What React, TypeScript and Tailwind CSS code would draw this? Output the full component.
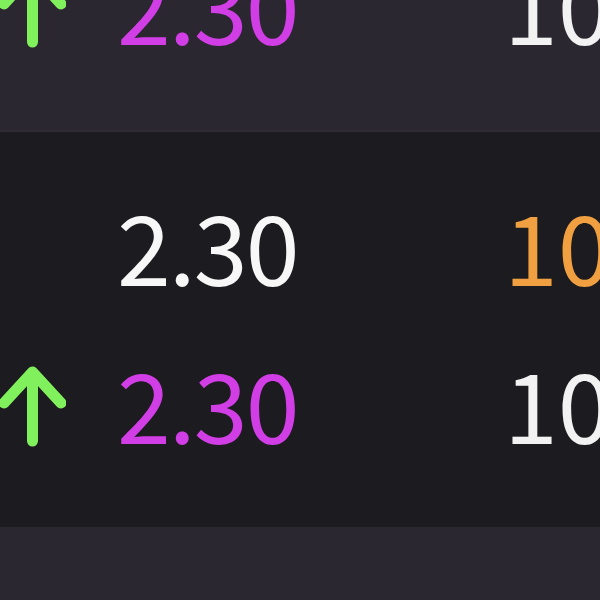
const rows = [
    { dark: false },
    { dark: true },
    { dark: false },
];

const UpArrow = () => (
    <svg width="66" height="84" viewBox="0 0 66 84" className="shrink-0 mt-[8px]">
        <path
            d="M32.5 9 L32.5 78 M4 40 L32.5 9 L61 40"
            fill="none"
            stroke="#80f15c"
            strokeWidth="11"
            strokeLinecap="round"
            strokeLinejoin="round"
        />
    </svg>
);

const PriceRow = ({ up }: { up: boolean }) => (
    <div className="flex items-center h-[98px] leading-none">
        <div className="w-[117px] shrink-0 flex items-center">
            {up && <UpArrow />}
        </div>
        <div
            className={`w-[387px] shrink-0 tracking-[-2px] ${up ? "text-[#d23ee6]" : "text-[#f7f7f7]"}`}
        >
            2.30
        </div>
        <div className={up ? "text-[#f2f2f2]" : "text-[#f0a040]"}>10</div>
    </div>
);

const Block = ({ dark }: { dark: boolean }) => (
    <div
        className={`h-[397px] flex flex-col pt-[62px] gap-[60px] ${
            dark ? "bg-[#1c1b1f] border-t-2 border-[#302c35]" : "bg-[#2b2731]"
        }`}
    >
        <PriceRow up={false} />
        <PriceRow up={true} />
    </div>
);

export default function App() {
    return (
        <div className="w-[600px] h-[600px] overflow-hidden bg-[#1c1b1f]">
            <div
                className="-mt-[267px] whitespace-nowrap text-[97px] font-normal"
                style={{ fontFamily: '"Noto Sans CJK SC", "Noto Sans", sans-serif' }}
            >
                {rows.map((r, i) => (
                    <Block key={i} dark={r.dark} />
                ))}
            </div>
        </div>
    );
}
